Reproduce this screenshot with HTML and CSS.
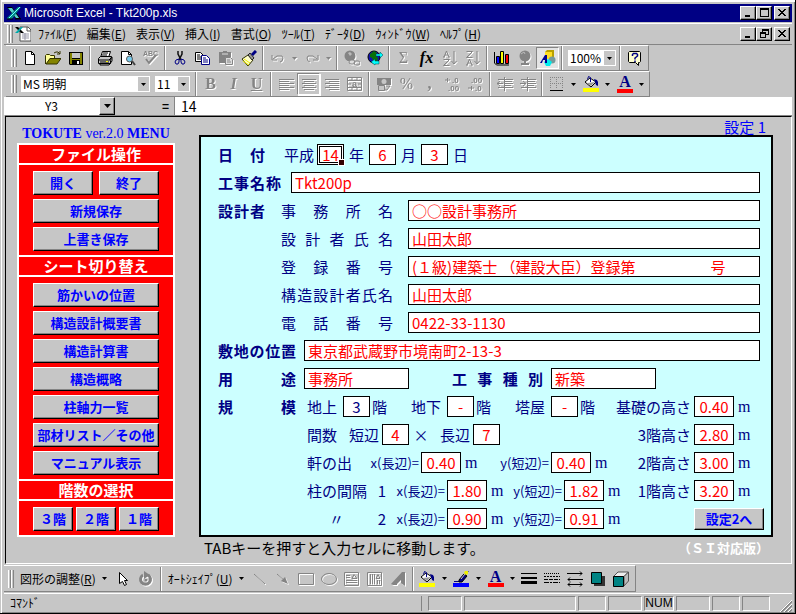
FILE: index.html
```html
<!DOCTYPE html>
<html lang="ja">
<head>
<meta charset="utf-8">
<title>Microsoft Excel - Tkt200p.xls</title>
<link rel="stylesheet" href="styles.css">
</head>
<body>
<header class="titlebar">
  <svg class="icon" viewBox="0 0 16 16"><path d="M1 2h5l9 12h-5z" fill="#000"/><path d="M2 3h4l7 10h-3z" fill="#5cc"/><path d="M15 2h-3L1 13v1h5z" fill="#088"/><path d="M14 2L3 13" stroke="#7ff"/><path d="M1 14h6M9 14h6" stroke="#000"/></svg>
  <h1>Microsoft Excel - Tkt200p.xls</h1>
  <div class="winbuttons">
    <button class="win" aria-label="最小化"><svg viewBox="0 0 12 10"><path d="M3 7h5v2H3z"/></svg></button>
    <button class="win" aria-label="最大化"><svg viewBox="0 0 12 10"><path d="M2 0h9v9H2zM3 2v6h7V2z" fill-rule="evenodd"/></svg></button>
    <button class="win close" aria-label="閉じる"><svg viewBox="0 0 12 10"><path d="M2 1h2v1h1v1h2V2h1V1h2v1H9v1H8v1H7v1h1v1h1v1h1v1H8V7H7V6H5v1H4v1H2V7h1V6h1V5h1V4H4V3H3V2H2z"/></svg></button>
  </div>
</header>

<nav class="menubar">
  <span class="grip"></span>
  <svg class="icon book" viewBox="0 0 16 16"><path d="M5 1h8l3 3v11H5z" fill="#fff" stroke="#555"/><path d="M12 1v4h4" fill="none" stroke="#555"/><path d="M7 8h7M7 10h7M7 12h7M10 7v7" stroke="#99a"/><path d="M0 1h3l6 6H6z" fill="#000"/><path d="M8 1H6L0 7h3z" fill="#0aa"/></svg>
  <button>ﾌｧｲﾙ(<u>F</u>)</button><button>編集(<u>E</u>)</button><button>表示(<u>V</u>)</button><button>挿入(<u>I</u>)</button><button>書式(<u>O</u>)</button><button>ﾂｰﾙ(<u>T</u>)</button><button>ﾃﾞｰﾀ(<u>D</u>)</button><button>ｳｨﾝﾄﾞｳ(<u>W</u>)</button><button>ﾍﾙﾌﾟ(<u>H</u>)</button>
  <div class="winbuttons">
    <button class="win" aria-label="ブックの最小化"><svg viewBox="0 0 12 10"><path d="M3 7h5v2H3z"/></svg></button>
    <button class="win" aria-label="ブックを元に戻す"><svg viewBox="0 0 12 10"><path d="M4 0h7v6H8V5h2V2H5v1H4zM2 3h6v6H2zM3 5v3h4V5z" fill-rule="evenodd"/></svg></button>
    <button class="win close" aria-label="ブックを閉じる"><svg viewBox="0 0 12 10"><path d="M2 1h2v1h1v1h2V2h1V1h2v1H9v1H8v1H7v1h1v1h1v1h1v1H8V7H7V6H5v1H4v1H2V7h1V6h1V5h1V4H4V3H3V2H2z"/></svg></button>
  </div>
</nav>

<div class="toolbar" role="toolbar" aria-label="標準">
  <span class="grip"></span>
  <button class="tool" aria-label="新規作成"><svg viewBox="0 0 16 16"><path d="M3.500 1.500h6l3 3v10h-9z" fill="#fff" stroke="#000"/><path d="M9.500 1.500v3h3" fill="none" stroke="#000"/></svg></button>
  <button class="tool" aria-label="開く"><svg viewBox="0 0 16 16"><path d="M0 5h1V4h4v1h5v3H5L1 14H0z" fill="#ff9"/><path d="M5 8h11l-4 6H1z" fill="#848400"/><path d="M.5 14V5.500l1-1h3l1 1h4V8M5 8.500h11l-4 5.500H1zM9 3l2-1h2l2 2m0-3v3h-3" fill="none" stroke="#330"/></svg></button>
  <button class="tool" aria-label="上書き保存"><svg viewBox="0 0 16 16"><path d="M1 2h14v13H2l-1-1z" fill="#000"/><path d="M2 3h2v6h8V3h2v11h-2v-4H4v4H2z" fill="#848400"/><path d="M4 3h8v5H4z" fill="#c6c6c6"/><path d="M9 11h2v3H9z" fill="#fff"/></svg></button>
  <span class="sep"></span>
  <button class="tool" aria-label="印刷"><svg viewBox="0 0 16 16"><path d="M5.500 1.500h8l-2 6h-8z" fill="#fff" stroke="#000"/><path d="M6 3h5M5 5h5" stroke="#000"/><path d="M1.500 8.500l2-2h11l-1 4v3h-12z" fill="#c6c6c6" stroke="#000"/><path d="M1 10h12M3 12h9M12 10l3-3v4l-3 4H3v-1" fill="none" stroke="#000"/><path d="M9 11h2v1H9z" fill="#ff0"/></svg></button>
  <button class="tool" aria-label="印刷プレビュー"><svg viewBox="0 0 16 16"><path d="M1.500 1.500h7l3 3v10h-10z" fill="#fff" stroke="#000"/><path d="M8.500 1.500v3h3" fill="none" stroke="#000"/><circle cx="9.500" cy="9" r="3" fill="#7ce" stroke="#555"/><path d="M12 11l3 4" stroke="#444" stroke-width="2"/></svg></button>
  <button class="tool off" aria-label="スペルチェック"><svg viewBox="0 0 16 16"><text x="0" y="6" font-size="7" font-weight="bold">ABC</text><path d="M3 9l3 4 7-8" fill="none" stroke="#848484" stroke-width="2"/></svg></button>
  <span class="sep"></span>
  <button class="tool" aria-label="切り取り"><svg viewBox="0 0 16 16"><path d="M6 1v3l3 6M10 1v3l-3 6" fill="none" stroke="#111" stroke-width="1.500"/><path d="M7 9l-3 1-1 2 1 2h2l1-2zM9 9l3 1 1 2-1 2h-2l-1-2z" fill="none" stroke="#000084"/></svg></button>
  <button class="tool" aria-label="コピー"><svg viewBox="0 0 16 16"><path d="M.5 2.500h5l3 3v6h-8z" fill="#fff" stroke="#000"/><path d="M2 5h3M2 7h5M2 9h5" stroke="#000"/><path d="M6.500 5.500h5l3 3v6h-8z" fill="#fff" stroke="#000084"/><path d="M8 8h3M8 10h5M8 12h5" stroke="#000084"/></svg></button>
  <button class="tool off" aria-label="貼り付け"><svg viewBox="0 0 16 16"><path d="M1 2h4V1h4v1h4v5H8v6H1z" fill="#848484"/><path d="M4 4h6" stroke="#ddd"/><path d="M7.500 7.500h5l2 2v5h-7z" fill="#ddd" stroke="#848484"/><path d="M9 10h3M9 12h4" stroke="#848484"/></svg></button>
  <button class="tool" aria-label="書式のコピー"><svg viewBox="0 0 16 16"><path d="M1 9l6-4 5 5-5 6z" fill="#ffc" stroke="#330"/><path d="M3 9l6 4M2 11l6 4" stroke="#ee0"/><path d="M7 5l2-2 4 5-2 2z" fill="#999" stroke="#222"/><path d="M11 5l4-4" stroke="#000084" stroke-width="3"/></svg></button>
  <span class="sep"></span>
  <button class="tool off" aria-label="元に戻す"><svg viewBox="0 0 16 16"><path d="M2 5v5h5M3 9l4-3h5l1 2-1 3-2 1" fill="none" stroke="#848484"/></svg></button>
  <button class="drop off" aria-label="元に戻す一覧"><svg viewBox="0 0 5 3"><path d="M0 0h5L2.500 3z"/></svg></button>
  <button class="tool off" aria-label="やり直し"><svg viewBox="0 0 16 16"><path d="M14 5v5H9M13 9L9 6H4L3 8l1 3 2 1" fill="none" stroke="#848484"/></svg></button>
  <button class="drop off" aria-label="やり直し一覧"><svg viewBox="0 0 5 3"><path d="M0 0h5L2.500 3z"/></svg></button>
  <span class="sep"></span>
  <button class="tool off" aria-label="ハイパーリンク"><svg viewBox="0 0 16 16"><circle cx="6" cy="6" r="5.500" fill="#848484"/><path d="M4 3l2-1 2 2-2 2z" fill="#bbb"/><rect x="5" y="10" width="6" height="4" rx="2" fill="#ddd" stroke="#848484"/><rect x="10" y="11" width="6" height="4" rx="2" fill="none" stroke="#848484"/></svg></button>
  <button class="tool" aria-label="Webツールバー"><svg viewBox="0 0 16 16"><circle cx="7" cy="7" r="6" fill="#1010b0" stroke="#000"/><path d="M3 4l4-3 3 2-1 3 2 2-1 4H7L5 8 3 7z" fill="#087008"/><path d="M9 4h4V2l3 3-3 3V6H9zM12 11H8V9l-4 3 4 3v-1h4z" fill="#0ff" stroke="#044" stroke-width=".5"/></svg></button>
  <span class="sep"></span>
  <button class="tool off glyph" aria-label="オートSUM">Σ</button>
  <button class="tool glyph fx" aria-label="関数貼り付け">fx</button>
  <button class="tool off" aria-label="昇順"><svg viewBox="0 0 16 16"><path d="M1 7h2M6 7h2M2 7l2.500-6L7 7M3 5h3M1.500 9.500h6l-6 6h6" fill="none" stroke="#848484"/><path d="M12 1v13M9.500 11l2.500 3 2.500-3" fill="none" stroke="#848484"/></svg></button>
  <button class="tool off" aria-label="降順"><svg viewBox="0 0 16 16"><path d="M1.500 1.500h6l-6 6h6M1 15h2M6 15h2M2 15l2.500-6L7 15M3 13h3" fill="none" stroke="#848484"/><path d="M12 1v13M9.500 11l2.500 3 2.500-3" fill="none" stroke="#848484"/></svg></button>
  <span class="sep"></span>
  <button class="tool" aria-label="グラフ ウィザード"><svg viewBox="0 0 16 16"><path d="M.5 2v11l2 2H15" fill="none" stroke="#000"/><path d="M2.500 6.500h3v7h-3z" fill="#00f" stroke="#000"/><path d="M6.500 1.500h3v12h-3z" fill="#ff0" stroke="#000"/><path d="M11.500 4.500h3v9h-3z" fill="#f00" stroke="#000"/></svg></button>
  <button class="tool off" aria-label="マップ"><svg viewBox="0 0 16 16"><circle cx="8" cy="6" r="5.500" fill="#848484"/><path d="M7 11h2v2h3v2H4v-2h3z" fill="#848484"/><path d="M4 4l3-2 1 2" fill="none" stroke="#bbb"/></svg></button>
  <button class="tool pressed" aria-label="図形描画"><svg viewBox="0 0 16 16"><path d="M5 2l2-2h7v9H5z" fill="#b8a000"/><path d="M5 2h7v7H5z" fill="#fd2"/><circle cx="12" cy="10" r="3.500" fill="#799"/><path d="M4 12l4-3 4 3-2 4H6z" fill="#0ee"/><path d="M0 13l5-8h2v8H5v-3H3l-1 3z" fill="#000090"/></svg></button>
  <span class="sep"></span>
  <span class="combo zoom"><select aria-label="ズーム"><option>100%</option></select><span class="arrow"><svg viewBox="0 0 5 3"><path d="M0 0h5L2.500 3z"/></svg></span></span>
  <span class="sep"></span>
  <button class="tool" aria-label="Officeアシスタント"><svg viewBox="0 0 16 16"><path d="M2.500 1.500h10l1 1v9l-1 1h-1v3l-3-3h-6l-1-1v-9z" fill="#ffffd0" stroke="#000"/><path d="M5.500 6V4.500l1-1h3l1 1V6L8 8v1.500M8 10.500v1.500" fill="none" stroke="#000084" stroke-width="1.500"/></svg></button>
</div>

<div class="toolbar" role="toolbar" aria-label="書式設定">
  <span class="grip"></span>
  <span class="combo font"><select aria-label="フォント"><option>MS 明朝</option></select><span class="arrow"><svg viewBox="0 0 5 3"><path d="M0 0h5L2.500 3z"/></svg></span></span>
  <span class="combo size"><select aria-label="フォント サイズ"><option>11</option></select><span class="arrow"><svg viewBox="0 0 5 3"><path d="M0 0h5L2.500 3z"/></svg></span></span>
  <span class="sep"></span>
  <button class="tool off glyph" aria-label="太字"><b>B</b></button>
  <button class="tool off glyph" aria-label="斜体"><b><i>I</i></b></button>
  <button class="tool off glyph" aria-label="下線"><b><u>U</u></b></button>
  <span class="sep"></span>
  <button class="tool off" aria-label="左揃え"><svg viewBox="0 0 16 16"><path d="M1 3.500h15M1 5.500h10M1 7.500h15M1 9.500h10M1 11.500h15M1 13.500h10" stroke="#848484"/></svg></button>
  <button class="tool off checked" aria-label="中央揃え"><svg viewBox="0 0 16 16"><path d="M1 3.500h14M3 5.500h10M1 7.500h14M3 9.500h10M1 11.500h14M3 13.500h10" stroke="#848484"/></svg></button>
  <button class="tool off" aria-label="右揃え"><svg viewBox="0 0 16 16"><path d="M1 3.500h14M5 5.500h10M1 7.500h14M5 9.500h10M1 11.500h14M5 13.500h10" stroke="#848484"/></svg></button>
  <button class="tool off" aria-label="セルを結合して中央揃え"><svg viewBox="0 0 16 16"><path d="M.5 1.500h14v13H.5zM.5 4.500h14M.5 11.500h14M5 1v3M10 1v3M5 12v3M10 12v3M1 8h3M11 8h3" fill="none" stroke="#848484"/><text x="5" y="11" font-size="9">a</text></svg></button>
  <span class="sep"></span>
  <button class="tool off" aria-label="通貨スタイル"><svg viewBox="0 0 16 16"><path d="M1 2h14v7H1z" fill="#848484"/><circle cx="8" cy="5.500" r="2.500" fill="#c6c6c6"/><path d="M2.500 9.500h6v5h-6zM10 10h4l-3 4H8" fill="#c6c6c6" stroke="#848484"/></svg></button>
  <button class="tool off glyph" aria-label="パーセント スタイル">%</button>
  <button class="tool off glyph" aria-label="桁区切りスタイル"><b>,</b></button>
  <button class="tool off" aria-label="小数点表示桁上げ"><svg viewBox="0 0 16 16"><text x="7" y="7" font-size="8">.0</text><text x="3" y="15" font-size="8">.00</text><path d="M0 4h5M2.500 2v4" stroke="#848484"/></svg></button>
  <button class="tool off" aria-label="小数点表示桁下げ"><svg viewBox="0 0 16 16"><text x="3" y="7" font-size="8">.00</text><text x="7" y="15" font-size="8">.0</text><path d="M0 12h6M3.500 10v4" stroke="#848484"/></svg></button>
  <span class="sep"></span>
  <button class="tool off" aria-label="インデント解除"><svg viewBox="0 0 16 16"><path d="M1 3.500h15M8 5.500h7M0 7.500h6M8 7.500h8M8 9.500h6M1 11.500h15M3 5l-3 2.500L3 10M7.500 1v14" fill="none" stroke="#848484"/></svg></button>
  <button class="tool off" aria-label="インデント"><svg viewBox="0 0 16 16"><path d="M1 3.500h15M8 5.500h7M0 7.500h6M8 7.500h8M8 9.500h6M1 11.500h15M3 5l3 2.500L3 10M7.500 1v14" fill="none" stroke="#848484"/></svg></button>
  <span class="sep"></span>
  <button class="tool" aria-label="罫線"><svg viewBox="0 0 16 16"><path d="M1 1.500h13M1 7.500h13M1.500 1v12M7.500 1v12M13.500 1v12" stroke="#848484" stroke-dasharray="1 1"/><path d="M1 14.500h13" stroke="#000"/></svg></button>
  <button class="drop" aria-label="罫線の種類"><svg viewBox="0 0 5 3"><path d="M0 0h5L2.500 3z"/></svg></button>
  <button class="tool" aria-label="塗りつぶしの色"><svg viewBox="0 0 16 16"><path d="M2 6l5-4 6 4-5 5z" fill="#fff" stroke="#000"/><path d="M4 7l4 3 4-4z" fill="#999"/><path d="M7.500 6V1.500l-2-1-1 3" fill="none" stroke="#000084"/><path d="M11 3l3 1 1 2v4l-2-1z" fill="#000084"/><path d="M0 12h16v4H0z" fill="#ff0"/></svg></button>
  <button class="drop" aria-label="塗りつぶしの色の一覧"><svg viewBox="0 0 5 3"><path d="M0 0h5L2.500 3z"/></svg></button>
  <button class="tool fontcolor" aria-label="フォントの色">A</button>
  <button class="drop" aria-label="フォントの色の一覧"><svg viewBox="0 0 5 3"><path d="M0 0h5L2.500 3z"/></svg></button>
</div>

<div class="formulabar">
  <input class="namebox" aria-label="名前ボックス" value="Y3">
  <button class="namedrop" aria-label="名前の一覧"><svg viewBox="0 0 7 4"><path d="M0 0h7L3.500 4z"/></svg></button>
  <button class="equals" aria-label="数式の編集">=</button>
  <input class="formula" aria-label="数式バー" value="14">
</div>

<main class="sheet">
  <aside class="side">
    <h2 class="brand"><b>TOKUTE</b> ver.2.0 <b>MENU</b></h2>
    <div class="menu">
      <h3>ファイル操作</h3>
      <div class="group">
        <div class="pair"><button>開く</button><button>終了</button></div>
        <button>新規保存</button>
        <button>上書き保存</button>
      </div>
      <h3>シート切り替え</h3>
      <div class="group">
        <button>筋かいの位置</button>
        <button>構造設計概要書</button>
        <button>構造計算書</button>
        <button>構造概略</button>
        <button>柱軸力一覧</button>
        <button>部材リスト／その他</button>
        <button>マニュアル表示</button>
      </div>
      <h3>階数の選択</h3>
      <div class="group">
        <div class="floors"><button>３階</button><button>２階</button><button>１階</button></div>
      </div>
    </div>
  </aside>

  <section class="content">
    <h2 class="page">設定 1</h2>
    <form class="panel">
      <div class="row">
        <span class="head c1 e5">日付</span>
        <label class="right c6 e9" for="year">平成</label>
        <span class="selected c9 e11"><input class="num" id="year" value="14"></span>
        <label class="unit wide c11 e13" for="year">年</label>
        <input class="num c13 e15" id="month" value="6">
        <label class="unit wide c15 e17" for="month">月</label>
        <input class="num c17 e19" id="day" value="3">
        <label class="unit wide c19 e21" for="day">日</label>
      </div>
      <div class="row">
        <label class="head narrow c1 e7" for="work">工事名称</label>
        <input class="c7 e43" id="work" value="Tkt200p">
      </div>
      <div class="row">
        <span class="head c1 e5">設計者</span>
        <label class="spread c6 e16" for="office">事務所名</label>
        <input class="c16 e43" id="office" value="○○設計事務所">
      </div>
      <div class="row">
        <label class="spread c6 e16" for="designer">設計者氏名</label>
        <input class="c16 e43" id="designer" value="山田太郎">
      </div>
      <div class="row">
        <label class="spread c6 e16" for="license">登録番号</label>
        <input class="c16 e43" id="license" value="(１級)建築士 （建設大臣）登録第　　　　　号">
      </div>
      <div class="row">
        <label class="spread c6 e16" for="structural">構造設計者氏名</label>
        <input class="c16 e43" id="structural" value="山田太郎">
      </div>
      <div class="row">
        <label class="spread c6 e16" for="phone">電話番号</label>
        <input class="c16 e43" id="phone" value="0422-33-1130">
      </div>
      <div class="row">
        <label class="head site c1 e8" for="site">敷地の位置</label>
        <input class="c8 e43" id="site" value="東京都武蔵野市境南町2-13-3">
      </div>
      <div class="row">
        <label class="head site c1 e8" for="use">用途</label>
        <input class="c8 e16" id="use" value="事務所">
        <label class="head site c19 e27" for="kind">工事種別</label>
        <input class="c27 e35" id="kind" value="新築">
      </div>
      <div class="row">
        <span class="head site c1 e8">規模</span>
        <label class="unit c8 e11" for="above">地上</label>
        <input class="num fixed c11 e13" id="above" value="3">
        <label class="unit c13 e15" for="above">階</label>
        <label class="unit c16 e19" for="below">地下</label>
        <input class="num c19 e21" id="below" value="-">
        <label class="unit c21 e23" for="below">階</label>
        <label class="unit c24 e27" for="tower">塔屋</label>
        <input class="num c27 e29" id="tower" value="-">
        <label class="unit c29 e31" for="tower">階</label>
        <label class="right c31 e38" for="base">基礎の高さ</label>
        <input class="num c38 e41" id="base" value="0.40">
        <span class="metre c41 e43">m</span>
      </div>
      <div class="row">
        <span class="unit c8 e11">間数</span>
        <label class="right c11 e14" for="short">短辺</label>
        <input class="num c14 e16" id="short" value="4">
        <span class="centre c16 e18">×</span>
        <label class="right c18 e21" for="long">長辺</label>
        <input class="num c21 e23" id="long" value="7">
        <label class="right c31 e38" for="h3">3階高さ</label>
        <input class="num c38 e41" id="h3" value="2.80">
        <span class="metre c41 e43">m</span>
      </div>
      <div class="row">
        <span class="unit c8 e12">軒の出</span>
        <label class="axis c12 e17" for="eavesx">x(長辺)=</label>
        <input class="num c17 e20" id="eavesx" value="0.40">
        <span class="metre c20 e22">m</span>
        <label class="axis c22 e27" for="eavesy">y(短辺)=</label>
        <input class="num c27 e30" id="eavesy" value="0.40">
        <span class="metre c30 e32">m</span>
        <label class="right c32 e38" for="h2">2階高さ</label>
        <input class="num c38 e41" id="h2" value="3.00">
        <span class="metre c41 e43">m</span>
      </div>
      <div class="row">
        <span class="unit c8 e13">柱の間隔</span>
        <span class="centre c13 e15">1</span>
        <label class="axis c14 e19" for="col1x">x(長辺)=</label>
        <input class="num c19 e22" id="col1x" value="1.80">
        <span class="metre c22 e24">m</span>
        <label class="axis c23 e28" for="col1y">y(短辺)=</label>
        <input class="num c28 e31" id="col1y" value="1.82">
        <span class="metre c31 e33">m</span>
        <label class="right c33 e38" for="h1">1階高さ</label>
        <input class="num c38 e41" id="h1" value="3.20">
        <span class="metre c41 e43">m</span>
      </div>
      <div class="row">
        <span class="centre c8 e13">〃</span>
        <span class="centre c13 e15">2</span>
        <label class="axis c14 e19" for="col2x">x(長辺)=</label>
        <input class="num c19 e22" id="col2x" value="0.90">
        <span class="metre c22 e24">m</span>
        <label class="axis c23 e28" for="col2y">y(短辺)=</label>
        <input class="num c28 e31" id="col2y" value="0.91">
        <span class="metre c31 e33">m</span>
        <button type="button" class="next c38 e43">設定2へ</button>
      </div>
    </form>
    <div class="notes"><span>TABキーを押すと入力セルに移動します。</span><b>（ＳＩ対応版）</b></div>
  </section>
</main>

<div class="toolbar drawing" role="toolbar" aria-label="図形描画">
  <span class="grip"></span>
  <button class="menutool"><span>図形の調整(<u>R</u>)</span><svg viewBox="0 0 5 3"><path d="M0 0h5L2.500 3z"/></svg></button>
  <button class="tool" aria-label="オブジェクトの選択"><svg viewBox="0 0 16 16"><path d="M4.500 1.500v11l3-2 2 4 2-1-2-4h3z" fill="#fff" stroke="#000"/></svg></button>
  <button class="tool off" aria-label="自由回転"><svg viewBox="0 0 16 16"><path d="M10 4a5 5 0 1 1-5 0" fill="none" stroke="#848484" stroke-width="3"/><path d="M6 0l6 4-6 4z" fill="#848484"/><circle cx="8" cy="9" r="1.500" fill="#848484"/></svg></button>
  <span class="sep"></span>
  <button class="menutool"><span>ｵｰﾄｼｪｲﾌﾟ(<u>U</u>)</span><svg viewBox="0 0 5 3"><path d="M0 0h5L2.500 3z"/></svg></button>
  <button class="tool off" aria-label="直線"><svg viewBox="0 0 16 16"><path d="M2 3l11 10" stroke="#848484"/></svg></button>
  <button class="tool off" aria-label="矢印"><svg viewBox="0 0 16 16"><path d="M2 3l8 7" stroke="#848484"/><path d="M13 13l-7-3 4-4z" fill="#848484"/></svg></button>
  <button class="tool off" aria-label="四角形"><svg viewBox="0 0 16 16"><path d="M.5 2.500h15v11H.5z" fill="none" stroke="#848484"/></svg></button>
  <button class="tool off" aria-label="楕円"><svg viewBox="0 0 16 16"><ellipse cx="8" cy="8" rx="7.500" ry="5.500" fill="none" stroke="#848484"/></svg></button>
  <button class="tool off" aria-label="テキスト ボックス"><svg viewBox="0 0 16 16"><path d="M.5 1.500h14v13H.5zM2 4.500h4M2 6.500h4M2 9.500h11M2 11.500h11M8 7.500l2-4 3 4z" fill="none" stroke="#848484"/></svg></button>
  <button class="tool off" aria-label="縦書きテキスト ボックス"><svg viewBox="0 0 16 16"><path d="M.5 1.500h14v13H.5zM3.500 3v10M5.500 3v10M7.500 3v10M10.500 9v4M12.500 9v4M9 7.500l2-4 2 4z" fill="none" stroke="#848484"/></svg></button>
  <button class="tool off" aria-label="ワードアート"><svg viewBox="0 0 16 16"><path d="M1 13L12 1h3v14l-4-3V9l-4 4v1H3z" fill="#848484"/></svg></button>
  <span class="sep"></span>
  <button class="tool" aria-label="図形の塗りつぶし"><svg viewBox="0 0 16 16"><path d="M2 6l5-4 6 4-5 5z" fill="#fff" stroke="#000"/><path d="M4 7l4 3 4-4z" fill="#999"/><path d="M7.500 6V1.500l-2-1-1 3" fill="none" stroke="#000084"/><path d="M11 3l3 1 1 2v4l-2-1z" fill="#000084"/><path d="M0 12h16v4H0z" fill="#ff0"/></svg></button>
  <button class="drop" aria-label="図形の塗りつぶしの一覧"><svg viewBox="0 0 5 3"><path d="M0 0h5L2.500 3z"/></svg></button>
  <button class="tool" aria-label="線の色"><svg viewBox="0 0 16 16"><path d="M1 10.500h5l7-8 3-3" fill="none" stroke="#000084"/><path d="M6 9l5-6 3 2-5 6H6z" fill="#000084" stroke="#000"/><path d="M8 8l4-5" stroke="#ccc"/><path d="M12 0h3v3l-2 1-2-2z" fill="#ee0"/><path d="M0 12h16v4H0z" fill="#00f"/></svg></button>
  <button class="drop" aria-label="線の色の一覧"><svg viewBox="0 0 5 3"><path d="M0 0h5L2.500 3z"/></svg></button>
  <button class="tool fontcolor" aria-label="文字の色">A</button>
  <button class="drop" aria-label="文字の色の一覧"><svg viewBox="0 0 5 3"><path d="M0 0h5L2.500 3z"/></svg></button>
  <button class="tool" aria-label="線のスタイル"><svg viewBox="0 0 16 16"><path d="M0 2h16v1H0zM0 6h16v2H0zM0 10h16v3H0z"/></svg></button>
  <button class="tool" aria-label="点線/実線のスタイル"><svg viewBox="0 0 16 16"><path d="M0 2.500h16" stroke="#000" stroke-dasharray="1 1"/><path d="M0 5.500h16" stroke="#000" stroke-dasharray="2 1"/><path d="M0 8.500h16" stroke="#000" stroke-dasharray="4 1"/><path d="M0 11.500h16" stroke="#000" stroke-dasharray="5 1 2 1"/></svg></button>
  <button class="tool" aria-label="矢印のスタイル"><svg viewBox="0 0 16 16"><path d="M0 2.500h15M1 8.500h15M1 13.500h14M13 .5l2 2-2 2M3 6.500l-2 2 2 2M3 11.500l-2 2 2 2M13 11.500l2 2-2 2" fill="none" stroke="#000"/></svg></button>
  <button class="tool" aria-label="影"><svg viewBox="0 0 16 16"><path d="M4 5h11v10H4z" fill="#333"/><path d="M1.500 1.500h10v11h-10z" fill="#008484" stroke="#000"/></svg></button>
  <button class="tool" aria-label="3-D"><svg viewBox="0 0 16 16"><path d="M.5 5.500L5 1h10.500L11 5.500z" fill="#eee" stroke="#555"/><path d="M11 5.500L15.500 1v9L11 15z" fill="#bbb" stroke="#555"/><path d="M.5 5.500h10v10H.5z" fill="#008484" stroke="#000"/></svg></button>
</div>

<footer class="status">
  <span class="message">ｺﾏﾝﾄﾞ</span>
  <div class="cells">
    <span class="w34"></span><span class="w112"></span><span class="w28"></span><span class="w34"></span><span class="w30">NUM</span><span class="w34"></span><span class="w28"></span><span class="w28"></span>
  </div>
  <svg class="resize" viewBox="0 0 12 12"><path d="M1 12L12 1M5 12l7-7M9 12l3-3" stroke="#848484" stroke-width="2"/><path d="M0 12L12 0M4 12l8-8M8 12l4-4" stroke="#fff"/></svg>
</footer>
</body>
</html>
```
FILE: styles.css
```css
:root {
  --face: #c6c6c6;
  --shade: #848484;
  --navy: #000084;
  --blue: #0000ff;
  --ui: "Noto Sans CJK JP", sans-serif;
}

* { box-sizing: border-box; }

body {
  margin: 0;
  min-height: 100vh;
  display: flex;
  flex-direction: column;
  padding: 4px 3px 1px 4px;
  border-right: 1px solid #000;
  border-bottom: 1px solid #000;
  background: var(--face);
  box-shadow: inset 1px 0 var(--face), inset 2px 2px #fff, inset -1px -1px var(--shade);
  font: 12px/18px var(--ui);
  color: #000;
}

h1, h2, h3 { margin: 0; font-weight: normal; }

button, input, select {
  margin: 0;
  padding: 0;
  border: 0;
  border-radius: 0;
  background: none;
  color: inherit;
  font: inherit;
  min-width: 0;
}

.icon { width: 16px; height: 16px; }

/* Title and menu */
.titlebar {
  display: flex;
  align-items: center;
  gap: 2px;
  height: 18px;
  padding-left: 2px;
  background: var(--navy);
  color: #fff;
}
.titlebar h1 { font: 12px/18px "Liberation Sans", sans-serif; }

.winbuttons { display: flex; margin-left: auto; padding-right: 2px; }
.win {
  display: flex;
  width: 16px;
  height: 14px;
  padding: 1px;
  background: var(--face);
  border: 1px solid #000;
  border-top-color: #fff;
  border-left-color: #fff;
  box-shadow: inset -1px -1px var(--shade);
}
.win svg { width: 12px; height: 10px; shape-rendering: crispEdges; }
.win.close { margin-left: 2px; }

.menubar {
  display: flex;
  align-items: center;
  height: 22px;
  margin-top: 1px;
  border-top: 1px solid #fff;
  border-bottom: 1px solid var(--shade);
}
.menubar > button { padding: 0 5px; white-space: nowrap; }
.menubar .book { margin: 0 2px 0 0; }

.grip {
  width: 6px;
  height: 18px;
  margin: 0 2px 0 3px;
  border-left: 1px solid #fff;
  border-right: 1px solid var(--shade);
  background: linear-gradient(90deg, var(--face) 1px, var(--shade) 1px 2px, #fff 2px 3px, var(--face) 3px);
  flex: none;
}

/* Toolbars */
.toolbar {
  display: flex;
  align-items: center;
  align-self: flex-start;
  height: 26px;
  padding: 0 2px 0 1px;
  border: 1px solid var(--shade);
  border-top-color: #fff;
  border-left: 0;
  margin-left: 2px;
}
.toolbar .grip { margin: 0 1px 0 4px; }
.tool {
  width: 23px;
  height: 22px;
  display: flex;
  align-items: center;
  justify-content: center;
  flex: none;
}
.tool svg { width: 16px; height: 16px; }
.tool text { fill: var(--shade); font-family: "Liberation Sans", sans-serif; font-weight: bold; }
.drop { width: 11px; height: 22px; display: flex; align-items: center; justify-content: center; flex: none; }
.drop svg, .arrow svg, .menutool svg { width: 5px; height: 3px; }
.off { color: var(--shade); fill: var(--shade); filter: drop-shadow(1px 1px 0 #fff); }
.pressed { background: #e4e4e4; border: 1px solid #fff; border-top-color: var(--shade); border-left-color: var(--shade); }
.checked { border: 1px solid #fff; border-top-color: var(--shade); border-left-color: var(--shade); }
.glyph { font: 16px/20px "Liberation Serif", serif; }
.fx { font-style: italic; font-weight: bold; }
.fontcolor {
  width: 16px;
  height: 17px;
  margin: 0 3px 0 4px;
  border-bottom: 4px solid #f00;
  color: var(--navy);
  font: bold 16px/12px "Liberation Serif", serif;
}
.sep {
  width: 2px;
  height: 24px;
  margin: 0 2px;
  border-left: 1px solid var(--shade);
  border-right: 1px solid #fff;
  flex: none;
}

.combo { display: grid; grid-template-columns: 1fr 11px; height: 16px; background: #fff; padding: 1px; }
.combo select { grid-area: 1 / 1 / 2 / 3; appearance: none; padding-left: 1px; line-height: 14px; }
.combo .arrow {
  grid-area: 1 / 2 / 2 / 3;
  display: flex;
  align-items: center;
  justify-content: center;
  background: var(--face);
  pointer-events: none;
}
.combo.zoom { width: 48px; margin: 0 1px 0 3px; }
.combo.font { width: 129px; margin: 0 5px 0 3px; }
.combo.size { width: 35px; margin-right: 3px; }

/* Formula bar */
.formulabar { display: flex; height: 18px; background: #fff; }
.namebox { width: 95px; text-align: center; }
.namedrop {
  width: 16px;
  display: flex;
  align-items: center;
  justify-content: center;
  background: var(--face);
  border: 1px solid #000;
  border-top-color: #fff;
  border-left-color: #fff;
  box-shadow: inset -1px -1px var(--shade);
}
.namedrop svg { width: 7px; height: 4px; }
.equals {
  width: 60px;
  padding-right: 5px;
  background: var(--face);
  border-right: 1px solid var(--shade);
  text-align: right;
  font-weight: bold;
}
.formula { flex: 1; padding-left: 6px; font-size: 14px; }

/* Sheet */
.sheet {
  flex: 1;
  display: flex;
  gap: 24px;
  align-items: flex-start;
  padding: 0 18px 4px 11px;
  border: 1px solid #000;
  border-right-color: #fff;
  border-bottom-color: #fff;
  box-shadow: 0 -1px var(--shade);
  margin: 1px 0 0 1px;
}
.side { width: 158px; flex: none; }
.brand {
  padding-top: 8px;
  text-align: center;
  white-space: nowrap;
  color: var(--blue);
  font: 14px/18px "Liberation Serif", serif;
}
.menu { border: 2px solid #fff; background: #f00; }
.menu h3 {
  height: 20px;
  border-bottom: 2px solid #fff;
  color: #fff;
  text-align: center;
  font: bold 15px/18px var(--ui);
}
.group + h3 { height: 22px; border-top: 2px solid #fff; }
.group { display: flex; flex-direction: column; gap: 4px; padding: 6px 14px 4px; }
.pair { display: flex; gap: 6px; }
.floors { display: flex; gap: 3px; }
.pair button, .floors button { flex: 1; }
.group button, .next {
  height: 24px;
  background: var(--face);
  border: 1px solid #000;
  border-top-color: #fff;
  border-left-color: #fff;
  box-shadow: inset -1px -1px var(--shade);
  color: var(--blue);
  font: bold 13px/20px var(--ui);
  white-space: nowrap;
}

.content { flex: 1; min-width: 0; }
.page { padding-right: 7px; text-align: right; color: var(--blue); font: 15px/20px var(--ui); height: 18px; }
.panel {
  display: flex;
  flex-direction: column;
  gap: 7px;
  padding: 7px 12px 6px;
  border: 2px solid #000;
  background: #cff;
  color: var(--navy);
  font-size: 15px;
  line-height: 21px;
}
.row { display: grid; grid-template-columns: repeat(42, minmax(0, 1fr)); height: 21px; white-space: nowrap; }
.row > * { grid-row: 1; }
.row input {
  width: calc(100% + 1px);
  height: 21px;
  padding: 0 3px;
  border: 1px solid #000;
  background: #fff;
  color: #f00;
}
.row .num { padding: 0; text-align: center; }
.row .fixed { color: var(--navy); }
.selected { position: relative; }
.selected input { box-shadow: inset 0 0 0 1px #fff, inset 0 0 0 2px #000; }
.selected::after {
  content: "";
  position: absolute;
  right: -2px;
  bottom: -1px;
  width: 5px;
  height: 5px;
  background: #300;
  border: 1px solid #fff;
}
.head { padding-left: 5px; font-weight: bold; text-align-last: justify; }
.head.narrow { padding-right: 10px; }
.head.site { padding-right: 8px; }
.spread { padding: 0 15px 0 3px; text-align-last: justify; }
.right { padding-right: 3px; text-align: right; }
.unit { padding-left: 3px; }
.unit.wide { padding-left: 6px; }
.centre { text-align: center; }
.axis { padding-right: 2px; text-align: right; font-size: 13px; }
.metre { padding-left: 5px; font: 16px/21px "Liberation Serif", serif; }
.next { margin-right: -5px; height: 22px; }

.c1 { grid-column-start: 1; }
.c6 { grid-column-start: 6; }
.c7 { grid-column-start: 7; }
.c8 { grid-column-start: 8; }
.c9 { grid-column-start: 9; }
.c11 { grid-column-start: 11; }
.c12 { grid-column-start: 12; }
.c13 { grid-column-start: 13; }
.c14 { grid-column-start: 14; }
.c15 { grid-column-start: 15; }
.c16 { grid-column-start: 16; }
.c17 { grid-column-start: 17; }
.c18 { grid-column-start: 18; }
.c19 { grid-column-start: 19; }
.c20 { grid-column-start: 20; }
.c21 { grid-column-start: 21; }
.c22 { grid-column-start: 22; }
.c23 { grid-column-start: 23; }
.c24 { grid-column-start: 24; }
.c27 { grid-column-start: 27; }
.c28 { grid-column-start: 28; }
.c29 { grid-column-start: 29; }
.c30 { grid-column-start: 30; }
.c31 { grid-column-start: 31; }
.c32 { grid-column-start: 32; }
.c33 { grid-column-start: 33; }
.c38 { grid-column-start: 38; }
.c41 { grid-column-start: 41; }
.e5 { grid-column-end: 5; }
.e7 { grid-column-end: 7; }
.e8 { grid-column-end: 8; }
.e9 { grid-column-end: 9; }
.e11 { grid-column-end: 11; }
.e12 { grid-column-end: 12; }
.e13 { grid-column-end: 13; }
.e14 { grid-column-end: 14; }
.e15 { grid-column-end: 15; }
.e16 { grid-column-end: 16; }
.e17 { grid-column-end: 17; }
.e18 { grid-column-end: 18; }
.e19 { grid-column-end: 19; }
.e20 { grid-column-end: 20; }
.e21 { grid-column-end: 21; }
.e22 { grid-column-end: 22; }
.e23 { grid-column-end: 23; }
.e24 { grid-column-end: 24; }
.e27 { grid-column-end: 27; }
.e28 { grid-column-end: 28; }
.e29 { grid-column-end: 29; }
.e30 { grid-column-end: 30; }
.e31 { grid-column-end: 31; }
.e32 { grid-column-end: 32; }
.e33 { grid-column-end: 33; }
.e35 { grid-column-end: 35; }
.e38 { grid-column-end: 38; }
.e41 { grid-column-end: 41; }
.e43 { grid-column-end: 43; }

.notes { display: flex; justify-content: space-between; padding: 2px 4px 0 5px; font-size: 15px; line-height: 18px; }
.notes b { color: #fff; font-size: 13px; }

/* Drawing bar and status bar */
.drawing { height: 27px; margin-left: 0; margin-top: 1px; }
.drawing .grip { margin-left: 3px; margin-right: 2px; }
.menutool { display: flex; align-items: center; gap: 6px; padding: 0 5px 0 4px; white-space: nowrap; }

.status {
  display: flex;
  align-items: center;
  height: 19px;
  margin-top: 1px;
  border-top: 1px solid #fff;
}
.message { flex: 1; padding-left: 6px; }
.cells { display: flex; gap: 2px; padding: 0 10px 0 6px; border-left: 1px solid var(--shade); }
.cells span {
  height: 15px;
  border: 1px solid #fff;
  border-top-color: var(--shade);
  border-left-color: var(--shade);
  text-align: center;
  font: 12px/13px "Liberation Sans", sans-serif;
}
.w28 { width: 28px; }
.w30 { width: 30px; }
.w34 { width: 34px; }
.w112 { width: 112px; }
.resize { width: 12px; height: 12px; align-self: flex-end; }
```
